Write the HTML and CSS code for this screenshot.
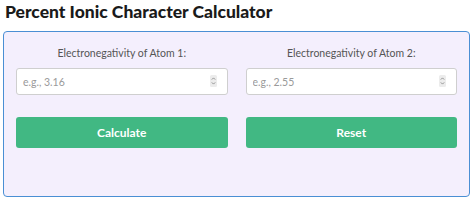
FILE: index.html
```html
<!DOCTYPE html>
<html lang="en">
<head>
    <meta charset="UTF-8">
    <meta name="viewport" content="width=device-width, initial-scale=1.0">
    <title>Percent Ionic Character Calculator</title>
    <link rel="stylesheet" href="styles.css">
</head>
<body>
    <h1 class="title">Percent Ionic Character Calculator</h1>
    <div class="calculator">
        <div class="column">
            <label for="atom1">Electronegativity of Atom 1:</label>
            <div class="field">
                <input type="number" id="atom1" placeholder="e.g., 3.16" step="0.01">
                <svg class="spinner" width="7" height="12" viewBox="0 0 7 12">
                    <rect x="0" y="0" width="7" height="12" rx="1.5" fill="#ececec"/>
                    <path d="M1.8 4.6 L3.5 2.9 L5.2 4.6 M1.8 7.4 L3.5 9.1 L5.2 7.4" fill="none" stroke="#8a8a8a" stroke-width="0.9"/>
                </svg>
            </div>
            <button class="btn" onclick="calculate()">Calculate</button>
        </div>
        <div class="column">
            <label for="atom2">Electronegativity of Atom 2:</label>
            <div class="field">
                <input type="number" id="atom2" placeholder="e.g., 2.55" step="0.01">
                <svg class="spinner" width="7" height="12" viewBox="0 0 7 12">
                    <rect x="0" y="0" width="7" height="12" rx="1.5" fill="#ececec"/>
                    <path d="M1.8 4.6 L3.5 2.9 L5.2 4.6 M1.8 7.4 L3.5 9.1 L5.2 7.4" fill="none" stroke="#8a8a8a" stroke-width="0.9"/>
                </svg>
            </div>
            <button class="btn" onclick="resetForm()">Reset</button>
        </div>
    </div>

    <script>
        function calculate() {
            const a = parseFloat(document.getElementById('atom1').value);
            const b = parseFloat(document.getElementById('atom2').value);
            if (isNaN(a) || isNaN(b)) return;
            const d = Math.abs(a - b);
            const pct = (1 - Math.exp(-0.25 * d * d)) * 100;
            alert(`Percent ionic character: ${pct.toFixed(2)}%`);
        }

        function resetForm() {
            document.getElementById('atom1').value = '';
            document.getElementById('atom2').value = '';
        }
    </script>
</body>
</html>
```

FILE: styles.css
```css
body {
    font-family: Lato, "Noto Sans", sans-serif;
    margin: 0;
    padding: 0 4px 0 3px;
    background-color: white;
    color: #222;
}
.title {
    font-size: 17.5px;
    font-weight: 900;
    margin: 0;
    padding: 1px 0 0 2px;
    height: 30px;
    line-height: 22px;
    color: #1a1a1a;
}
.calculator {
    display: grid;
    grid-template-columns: 1fr 1fr;
    gap: 18px;
    height: 166px;
    box-sizing: border-box;
    padding: 13px 12px 0 12px;
    background-color: #f4effd;
    border: 1.5px solid #4a8fd4;
    border-radius: 4px;
}
.column {
    display: flex;
    flex-direction: column;
}
label {
    text-align: center;
    font-size: 10.5px;
    color: #555;
    height: 23px;
    line-height: 16px;
}
.field {
    position: relative;
    display: flex;
}
.field input {
    flex: 1;
    min-width: 0;
}
input {
    height: 27px;
    box-sizing: border-box;
    border: 1px solid #cfcfcf;
    border-radius: 3px;
    padding: 0 6px;
    font-family: inherit;
    font-size: 10.5px;
    color: #333;
    background-color: white;
}
input::placeholder {
    color: #9a9a9a;
}
input::-webkit-inner-spin-button,
input::-webkit-outer-spin-button {
    -webkit-appearance: none;
    margin: 0;
}
.spinner {
    position: absolute;
    right: 11px;
    top: 7px;
}
.btn {
    margin-top: 22px;
    height: 31px;
    border: none;
    border-radius: 3px;
    background-color: #41b883;
    color: white;
    font-family: inherit;
    font-size: 12px;
    font-weight: bold;
    cursor: pointer;
}
.btn:hover {
    background-color: #3aa676;
}
```
